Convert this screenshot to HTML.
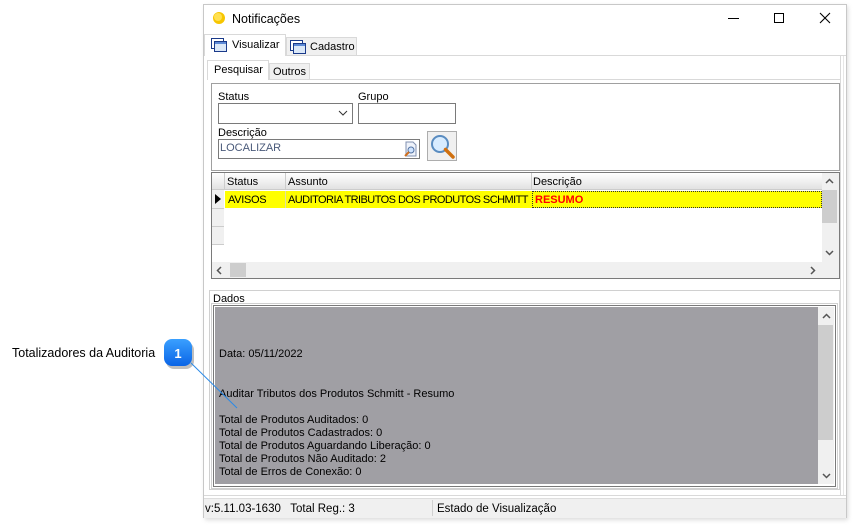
<!DOCTYPE html>
<html><head><meta charset="utf-8"><style>
*{margin:0;padding:0;box-sizing:border-box}
body{width:856px;height:525px;background:#fff;position:relative;overflow:hidden;font-family:"Liberation Sans",Tahoma,sans-serif;font-size:11px;color:#000}
.a{position:absolute}
.t{position:absolute;white-space:nowrap;line-height:13px}
</style></head><body>
<div class="t" style="left:12px;top:345px;font-size:12.5px;line-height:16px">Totalizadores da Auditoria</div>
<!-- window -->
<div class="a" style="left:205px;top:6px;width:643px;height:514px;background:#999;opacity:.35;filter:blur(2px)"></div>
<div class="a" style="left:203px;top:4px;width:644px;height:514px;background:#fff;border:1px solid #c8c8c8"></div>
<svg class="a" style="left:211px;top:10px" width="16" height="16"><circle cx="8" cy="8" r="6" fill="#f7c600"/><circle cx="7" cy="7" r="4" fill="#ffe050"/></svg>
<div class="t" style="left:232px;top:11px;font-size:12.5px;line-height:16px">Notificações</div>
<div class="a" style="left:728px;top:18px;width:11px;height:1px;background:#000"></div>
<div class="a" style="left:774px;top:13px;width:10px;height:10px;border:1px solid #000"></div>
<svg class="a" style="left:819px;top:12px" width="12" height="12"><path d="M1 1L11 11M11 1L1 11" stroke="#000" stroke-width="1.1"/></svg>
<!-- tabs -->
<div class="a" style="left:204px;top:55px;width:642px;height:1px;background:#d9d9d9"></div>
<div class="a" style="left:286px;top:37px;width:71px;height:18px;background:#f0f0f0;border:1px solid #d9d9d9;border-bottom:none"></div>
<div class="a" style="left:204px;top:34px;width:82px;height:22px;background:#fff;border:1px solid #d9d9d9;border-bottom:none"></div>
<svg class="a" style="left:210px;top:37px" width="18" height="16"><rect x="1.5" y="1.5" width="12" height="10" fill="#fff" stroke="#1a3a8a"/><rect x="4.5" y="4.5" width="12" height="10" fill="#dbe8f8" stroke="#1a3a8a"/><rect x="5" y="5" width="11" height="2" fill="#5d8ad6"/></svg>
<div class="t" style="left:232px;top:39px">Visualizar</div>
<svg class="a" style="left:289px;top:39px" width="18" height="16"><rect x="1.5" y="1.5" width="12" height="10" fill="#fff" stroke="#1a3a8a"/><rect x="4.5" y="4.5" width="12" height="10" fill="#dbe8f8" stroke="#1a3a8a"/><rect x="5" y="5" width="11" height="2" fill="#5d8ad6"/></svg>
<div class="t" style="left:310px;top:41px">Cadastro</div>
<div class="a" style="left:207px;top:79px;width:634px;height:1px;background:#d9d9d9"></div>
<div class="a" style="left:269px;top:63px;width:41px;height:16px;background:#f0f0f0;border:1px solid #d9d9d9;border-bottom:none"></div>
<div class="a" style="left:207px;top:60px;width:62px;height:20px;background:#fff;border:1px solid #d9d9d9;border-bottom:none"></div>
<div class="t" style="left:214px;top:64px">Pesquisar</div>
<div class="t" style="left:273px;top:66px">Outros</div>
<div class="a" style="left:840px;top:56px;width:1px;height:440px;background:#d9d9d9"></div>
<div class="a" style="left:843px;top:56px;width:1px;height:440px;background:#e6e6e6"></div>
<div class="a" style="left:204px;top:495px;width:642px;height:1px;background:#d9d9d9"></div>
<!-- search panel -->
<div class="a" style="left:211px;top:83px;width:629px;height:88px;border:1px solid #a0a0a0"></div>
<div class="t" style="left:218px;top:91px">Status</div>
<div class="a" style="left:218px;top:103px;width:135px;height:21px;border:1px solid #7a7a7a"></div>
<svg class="a" style="left:338px;top:110px" width="10" height="6"><path d="M1 1L5 5L9 1" stroke="#333" fill="none"/></svg>
<div class="t" style="left:358px;top:91px">Grupo</div>
<div class="a" style="left:358px;top:103px;width:98px;height:21px;border:1px solid #7a7a7a"></div>
<div class="t" style="left:218px;top:127px">Descrição</div>
<div class="a" style="left:218px;top:139px;width:202px;height:20px;border:1px solid #7a7a7a"></div>
<div class="t" style="left:220px;top:142px;color:#4a5a7a">LOCALIZAR</div>
<svg class="a" style="left:402px;top:141px" width="16" height="16"><path d="M4 1H11L14 4V15H4Z" fill="#eef2fa" stroke="#8090b0"/><circle cx="9" cy="9" r="3" fill="#cfe4ff" stroke="#5070a0"/><path d="M7 11L3 15" stroke="#d07020" stroke-width="2"/></svg>
<div class="a" style="left:427px;top:131px;width:30px;height:30px;background:#f0f0f0;border:1px solid #adadad"></div>
<svg class="a" style="left:429px;top:133px" width="27" height="27"><circle cx="11" cy="11" r="8" fill="#d8ecff" stroke="#5a8cc0" stroke-width="2"/><path d="M16.5 16.5L24 24" stroke="#d07010" stroke-width="3.5" stroke-linecap="round"/></svg>
<!-- grid -->
<div class="a" style="left:211px;top:172px;width:629px;height:107px;border:1px solid #7a7a7a;background:#f0f0f0"></div>
<div class="a" style="left:212px;top:173px;width:610px;height:89px;background:#fff"></div>
<div class="a" style="left:212px;top:173px;width:610px;height:17px;background:linear-gradient(#fff,#e2e2e2);border-bottom:1px solid #ccc"></div>
<div class="a" style="left:224px;top:173px;width:1px;height:17px;background:#ccc"></div>
<div class="a" style="left:285px;top:173px;width:1px;height:17px;background:#ccc"></div>
<div class="a" style="left:531px;top:173px;width:1px;height:17px;background:#ccc"></div>
<div class="t" style="left:227px;top:176px">Status</div>
<div class="t" style="left:288px;top:176px">Assunto</div>
<div class="t" style="left:533px;top:176px">Descrição</div>
<div class="a" style="left:212px;top:190px;width:12px;height:54px;background:#f0f0f0"></div>
<div class="a" style="left:212px;top:208px;width:12px;height:1px;background:#ccc"></div>
<div class="a" style="left:212px;top:226px;width:12px;height:1px;background:#ccc"></div>
<div class="a" style="left:212px;top:244px;width:12px;height:1px;background:#ccc"></div>
<svg class="a" style="left:214px;top:194px" width="8" height="10"><path d="M1 0L7 5L1 10Z" fill="#000"/></svg>
<div class="a" style="left:225px;top:191px;width:597px;height:17px;background:#ff0"></div>
<div class="a" style="left:532px;top:191px;width:290px;height:17px;border:1px dotted #333"></div>
<div class="a" style="left:285px;top:191px;width:1px;height:17px;background:#e0e0a0"></div>
<div class="t" style="left:228px;top:194px;letter-spacing:-0.3px">AVISOS</div>
<div class="t" style="left:288px;top:194px;letter-spacing:-0.55px">AUDITORIA TRIBUTOS DOS PRODUTOS SCHMITT</div>
<div class="t" style="left:535px;top:194px;color:#f00;font-weight:bold">RESUMO</div>
<div class="a" style="left:822px;top:190px;width:15px;height:33px;background:#cdcdcd"></div>
<svg class="a" style="left:825px;top:178px" width="9" height="6"><path d="M1 5L4.5 1.5L8 5" stroke="#555" stroke-width="1.5" fill="none"/></svg>
<svg class="a" style="left:825px;top:250px" width="9" height="6"><path d="M1 1L4.5 4.5L8 1" stroke="#555" stroke-width="1.5" fill="none"/></svg>
<div class="a" style="left:230px;top:263px;width:16px;height:14px;background:#cdcdcd"></div>
<svg class="a" style="left:216px;top:266px" width="6" height="9"><path d="M5 1L1.5 4.5L5 8" stroke="#555" stroke-width="1.5" fill="none"/></svg>
<svg class="a" style="left:810px;top:266px" width="6" height="9"><path d="M1 1L4.5 4.5L1 8" stroke="#555" stroke-width="1.5" fill="none"/></svg>
<!-- dados -->
<div class="a" style="left:209px;top:290px;width:631px;height:200px;border:1px solid #d0d0d0"></div>
<div class="t" style="left:213px;top:293px">Dados</div>
<div class="a" style="left:213px;top:305px;width:623px;height:182px;border:1px solid #7a7a7a;outline:1px solid #d0d0d0;outline-offset:1px"></div>
<div class="a" style="left:215px;top:307px;width:603px;height:177px;background:#a09fa4"></div>
<div class="a" style="left:818px;top:307px;width:16px;height:177px;background:#f0f0f0"></div>
<div class="a" style="left:818px;top:325px;width:15px;height:115px;background:#cdcdcd"></div>
<svg class="a" style="left:822px;top:313px" width="9" height="6"><path d="M1 5L4.5 1.5L8 5" stroke="#555" stroke-width="1.5" fill="none"/></svg>
<svg class="a" style="left:822px;top:473px" width="9" height="6"><path d="M1 1L4.5 4.5L8 1" stroke="#555" stroke-width="1.5" fill="none"/></svg>
<div class="t" style="left:219px;top:348px">Data: 05/11/2022</div>
<div class="t" style="left:219px;top:388px">Auditar Tributos dos Produtos Schmitt - Resumo</div>
<div class="t" style="left:219px;top:414px">Total de Produtos Auditados: 0</div>
<div class="t" style="left:219px;top:427px">Total de Produtos Cadastrados: 0</div>
<div class="t" style="left:219px;top:440px">Total de Produtos Aguardando Liberação: 0</div>
<div class="t" style="left:219px;top:453px">Total de Produtos Não Auditado: 2</div>
<div class="t" style="left:219px;top:466px">Total de Erros de Conexão: 0</div>
<!-- status bar -->
<div class="a" style="left:204px;top:498px;width:642px;height:20px;background:#f0f0f0;border-top:1px solid #ddd"></div>
<div class="a" style="left:432px;top:500px;width:1px;height:16px;background:#d0d0d0"></div>
<div class="t" style="left:205px;top:503px;font-size:11.5px">v:5.11.03-1630&nbsp;&nbsp; Total Reg.: 3</div>
<div class="t" style="left:437px;top:503px;font-size:11.5px">Estado de Visualização</div>
<!-- callout on top -->
<svg class="a" style="left:160px;top:336px" width="90" height="80">
<defs><linearGradient id="g" x1="0" y1="0" x2="0" y2="1"><stop offset="0" stop-color="#3aa0ff"/><stop offset="1" stop-color="#0a64e6"/></linearGradient></defs>
<rect x="6" y="6" width="28" height="27" rx="8" fill="#000" opacity=".25"/>
<rect x="4" y="3" width="28" height="27" rx="8" fill="url(#g)"/>
<text x="18" y="22" font-family="Liberation Sans" font-size="13" font-weight="bold" fill="#fff" text-anchor="middle">1</text>
<line x1="31" y1="27" x2="77" y2="72" stroke="#2a8ae8" stroke-width="1"/>
</svg>
</body></html>
